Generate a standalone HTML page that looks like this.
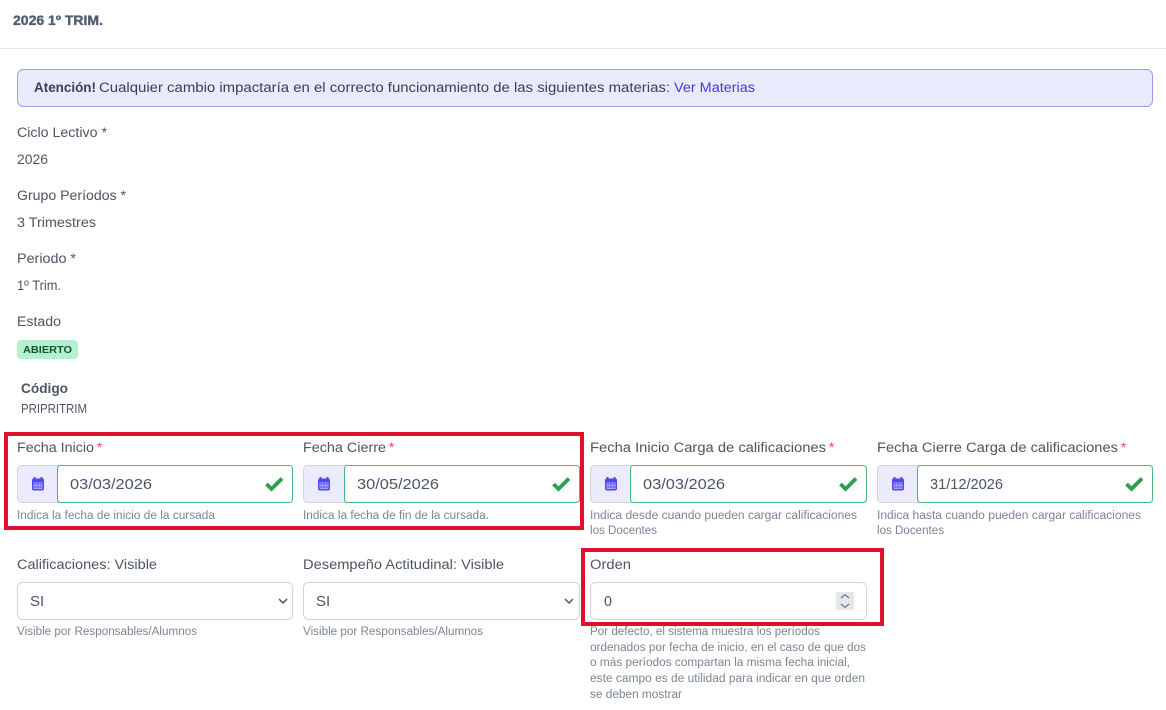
<!DOCTYPE html>
<html lang="es"><head><meta charset="utf-8"><title>2026 1º TRIM.</title>
<style>
html,body{margin:0;padding:0;background:#fff;width:1166px;height:710px;overflow:hidden}
svg{display:block;position:absolute;left:0;top:0}
text{font-family:"Liberation Sans",sans-serif;fill:#4b5563;font-size:13.5px}
.s{font-size:11.5px;fill:#7b8494}
.i{font-size:15px;fill:#4b5563}
.b{font-weight:bold}
.r{fill:#f43f5e}
.box{fill:#fff;stroke:#d1d5db;stroke-width:1}
.pre{fill:#ecebfd;stroke:#d1d5db;stroke-width:1}
.ok{fill:#fff;stroke:#48b978;stroke-width:1}
.red{fill:none;stroke:#e0102c;stroke-width:4}
.chk{fill:none;stroke:#2f9e4f;stroke-width:3.8}
.chev{fill:none;stroke:#4b5563;stroke-width:1.5}
</style></head><body>
<svg width="1166" height="710" viewBox="0 0 1166 710" xmlns="http://www.w3.org/2000/svg">
<defs>
<g id="cal"><path d="M2.5 0v2M9.500 0v2" stroke="#4f46f5" stroke-width="2" fill="none"/><rect x="0" y="1.500" width="12" height="12" rx="2" fill="#4f46f5"/><rect x="1.500" y="5.500" width="9" height="6.500" fill="#a9a5f9"/><path d="M2.300 7h2M5 7h2M7.700 7h2M2.300 10h2M5 10h2M7.700 10h2" stroke="#4f46f5" stroke-width="1.300" fill="none"/></g>
<path id="chk" d="M0.500 8l5 5L16 2.500" class="chk"/>
</defs>

<text x="13" y="25" class="b" style="font-size:14px;fill:#4f5a70;stroke:#4f5a70;stroke-width:.35" textLength="90" lengthAdjust="spacingAndGlyphs">2026 1º TRIM.</text>
<rect x="0" y="48" width="1166" height="1" fill="#e3e8f2"/>

<rect x="17.5" y="69.5" width="1135" height="37" rx="6" fill="#eaeafd" stroke="#9a9af5"/>
<text x="34" y="92" class="b" style="fill:#374151" textLength="62" lengthAdjust="spacingAndGlyphs">Atención!</text>
<text x="99" y="92" style="fill:#374151" textLength="571" lengthAdjust="spacingAndGlyphs">Cualquier cambio impactaría en el correcto funcionamiento de las siguientes materias:</text>
<text x="674" y="92" style="fill:#4338e0" textLength="81" lengthAdjust="spacingAndGlyphs">Ver Materias</text>

<text x="17" y="137" textLength="90" lengthAdjust="spacingAndGlyphs">Ciclo Lectivo *</text>
<text x="17" y="164" textLength="31" lengthAdjust="spacingAndGlyphs">2026</text>
<text x="17" y="200" textLength="109" lengthAdjust="spacingAndGlyphs">Grupo Períodos *</text>
<text x="17" y="227" textLength="79" lengthAdjust="spacingAndGlyphs">3 Trimestres</text>
<text x="17" y="263" textLength="59" lengthAdjust="spacingAndGlyphs">Periodo *</text>
<text x="17" y="290" textLength="44" lengthAdjust="spacingAndGlyphs">1º Trim.</text>
<text x="17" y="326" textLength="44" lengthAdjust="spacingAndGlyphs">Estado</text>
<rect x="17" y="340" width="61" height="19" rx="4" fill="#b2f0cf"/>
<text x="23" y="353" class="b" style="font-size:10.5px;fill:#14532d" textLength="49" lengthAdjust="spacingAndGlyphs">ABIERTO</text>
<text x="21" y="393" class="b" style="fill:#4b5563" textLength="47" lengthAdjust="spacingAndGlyphs">Código</text>
<text x="21" y="413" style="font-size:12.5px" textLength="66" lengthAdjust="spacingAndGlyphs">PRIPRITRIM</text>

<text x="17" y="452" textLength="77" lengthAdjust="spacingAndGlyphs">Fecha Inicio</text><text x="97" y="452" class="r">*</text>
<text x="303" y="452" textLength="83" lengthAdjust="spacingAndGlyphs">Fecha Cierre</text><text x="389" y="452" class="r">*</text>
<text x="590" y="452" textLength="236" lengthAdjust="spacingAndGlyphs">Fecha Inicio Carga de calificaciones</text><text x="829" y="452" class="r">*</text>
<text x="877" y="452" textLength="241" lengthAdjust="spacingAndGlyphs">Fecha Cierre Carga de calificaciones</text><text x="1121" y="452" class="r">*</text>

<rect x="17.5" y="465.5" width="45" height="37" rx="4" class="pre"/><rect x="57.5" y="465.5" width="235" height="37" rx="3" class="ok"/>
<rect x="303.5" y="465.5" width="45" height="37" rx="4" class="pre"/><rect x="344.5" y="465.5" width="235" height="37" rx="3" class="ok"/>
<rect x="590.5" y="465.5" width="45" height="37" rx="4" class="pre"/><rect x="630.5" y="465.5" width="236" height="37" rx="3" class="ok"/>
<rect x="877.5" y="465.5" width="45" height="37" rx="4" class="pre"/><rect x="917.5" y="465.5" width="235" height="37" rx="3" class="ok"/>

<use href="#cal" x="32" y="477"/><use href="#cal" x="318" y="477"/><use href="#cal" x="605" y="477"/><use href="#cal" x="892" y="477"/>
<use href="#chk" x="266" y="476"/><use href="#chk" x="553" y="476"/><use href="#chk" x="840" y="476"/><use href="#chk" x="1126" y="476"/>

<text x="70" y="489" class="i" textLength="82" lengthAdjust="spacingAndGlyphs">03/03/2026</text>
<text x="357" y="489" class="i" textLength="82" lengthAdjust="spacingAndGlyphs">30/05/2026</text>
<text x="643" y="489" class="i" textLength="82" lengthAdjust="spacingAndGlyphs">03/03/2026</text>
<text x="930" y="489" class="i" textLength="73" lengthAdjust="spacingAndGlyphs">31/12/2026</text>

<text x="17" y="519" class="s" textLength="198" lengthAdjust="spacingAndGlyphs">Indica la fecha de inicio de la cursada</text>
<text x="303" y="519" class="s" textLength="186" lengthAdjust="spacingAndGlyphs">Indica la fecha de fin de la cursada.</text>
<text x="590" y="519" class="s" textLength="267" lengthAdjust="spacingAndGlyphs">Indica desde cuando pueden cargar calificaciones</text>
<text x="590" y="534" class="s" textLength="67" lengthAdjust="spacingAndGlyphs">los Docentes</text>
<text x="877" y="519" class="s" textLength="264" lengthAdjust="spacingAndGlyphs">Indica hasta cuando pueden cargar calificaciones</text>
<text x="877" y="534" class="s" textLength="67" lengthAdjust="spacingAndGlyphs">los Docentes</text>

<text x="17" y="569" textLength="140" lengthAdjust="spacingAndGlyphs">Calificaciones: Visible</text>
<text x="303" y="569" textLength="201" lengthAdjust="spacingAndGlyphs">Desempeño Actitudinal: Visible</text>
<text x="590" y="569" textLength="41" lengthAdjust="spacingAndGlyphs">Orden</text>

<rect x="17.5" y="582.5" width="275" height="37" rx="5" class="box"/>
<rect x="303.5" y="582.5" width="276" height="37" rx="5" class="box"/>
<rect x="590.5" y="582.5" width="276" height="37" rx="5" class="box"/>
<text x="30" y="606" class="i">SI</text>
<text x="316" y="606" class="i">SI</text>
<text x="604" y="606" class="i" textLength="8" lengthAdjust="spacingAndGlyphs">0</text>
<path d="M279 599l4 4 4-4" class="chev"/><path d="M565 599l4 4 4-4" class="chev"/>
<rect x="836" y="592" width="18" height="18" fill="#e5e7eb"/>
<path d="M841 598l4-3.500 4 3.500M841 604l4 3.500 4-3.500" fill="none" stroke="#6b7280" stroke-width="1.200"/>

<text x="17" y="635" class="s" textLength="180" lengthAdjust="spacingAndGlyphs">Visible por Responsables/Alumnos</text>
<text x="303" y="635" class="s" textLength="180" lengthAdjust="spacingAndGlyphs">Visible por Responsables/Alumnos</text>
<text x="590" y="635" class="s" textLength="230" lengthAdjust="spacingAndGlyphs">Por defecto, el sistema muestra los períodos</text>
<text x="590" y="651" class="s" textLength="276" lengthAdjust="spacingAndGlyphs">ordenados por fecha de inicio, en el caso de que dos</text>
<text x="590" y="666" class="s" textLength="260" lengthAdjust="spacingAndGlyphs">o más períodos compartan la misma fecha inicial,</text>
<text x="590" y="682" class="s" textLength="275" lengthAdjust="spacingAndGlyphs">este campo es de utilidad para indicar en que orden</text>
<text x="590" y="698" class="s" textLength="92" lengthAdjust="spacingAndGlyphs">se deben mostrar</text>

<rect x="6" y="434" width="576" height="94" class="red"/>
<rect x="583" y="550" width="299" height="74" class="red"/>
</svg>
</body></html>
